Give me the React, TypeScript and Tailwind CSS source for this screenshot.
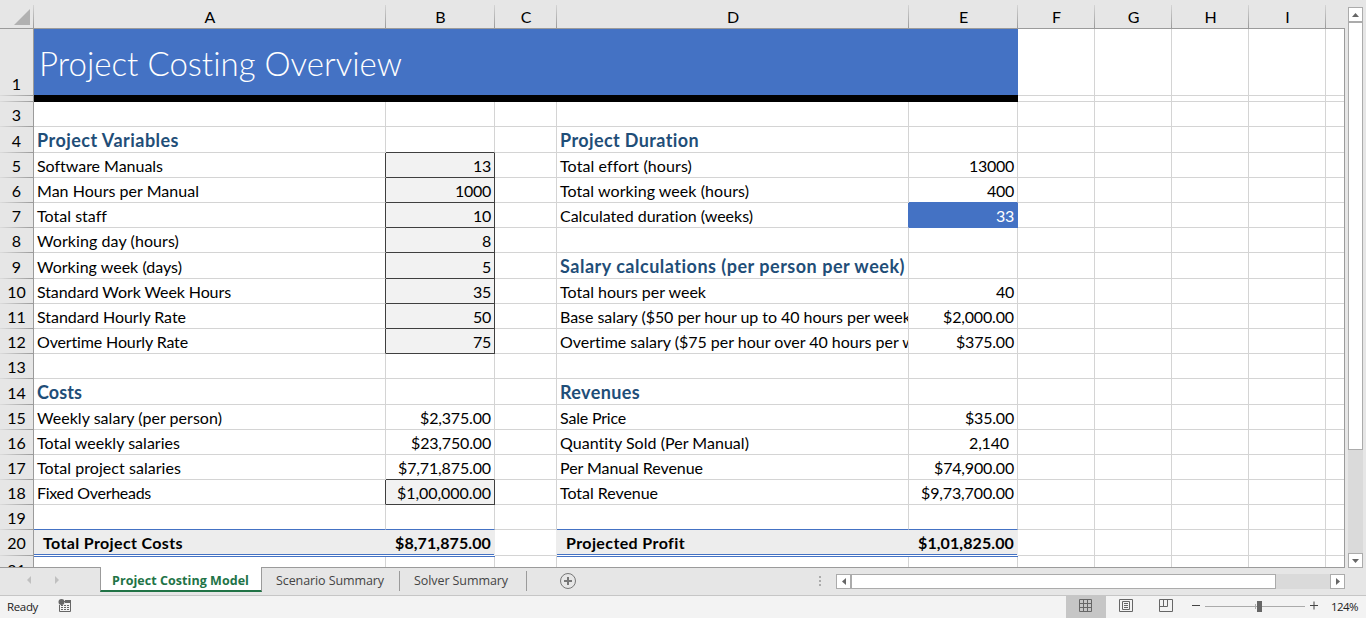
import { useLayoutEffect, useRef } from "react";

type FitProps = { text: string; w?: number; className?: string };

/* Text whose tracking is adjusted so that it takes a given width. */
function Fit({ text, w, className = "" }: FitProps) {
  const ref = useRef<HTMLSpanElement>(null);
  useLayoutEffect(() => {
    const el = ref.current;
    if (!el || !w) return;
    el.style.letterSpacing = "0.001px";
    const natural = el.getBoundingClientRect().width;
    el.style.letterSpacing = `${(w - natural) / text.length}px`;
  }, [text, w]);
  return (
    <span ref={ref} className={`inline-block whitespace-pre ${className}`}>
      {text}
    </span>
  );
}

type Row = { n: number; h: string; a?: [string, number]; b?: [string, number]; d?: [string, number]; e?: [string, number] };

const rows: Row[] = [
  { n: 3, h: "h-[25px]" },
  { n: 4, h: "h-[26px]", a: ["Project Variables", 142], d: ["Project Duration", 139] },
  { n: 5, h: "h-[25px]", a: ["Software Manuals", 126], b: ["13", 18], d: ["Total effort (hours)", 132], e: ["13000", 45] },
  { n: 6, h: "h-[25px]", a: ["Man Hours per Manual", 162], b: ["1000", 36], d: ["Total working week (hours)", 189], e: ["400", 27] },
  { n: 7, h: "h-[25px]", a: ["Total staff", 70], b: ["10", 18], d: ["Calculated duration (weeks)", 193], e: ["33", 18] },
  { n: 8, h: "h-[25px]", a: ["Working day (hours)", 142], b: ["8", 9] },
  { n: 9, h: "h-[26px]", a: ["Working week (days)", 145], b: ["5", 9], d: ["Salary calculations (per person per week)", 345] },
  { n: 10, h: "h-[25px]", a: ["Standard Work Week Hours", 194], b: ["35", 18], d: ["Total hours per week", 146], e: ["40", 18] },
  { n: 11, h: "h-[25px]", a: ["Standard Hourly Rate", 149], b: ["50", 18], d: ["Base salary ($50 per hour up to 40 hours per week)", 355], e: ["$2,000.00", 71] },
  { n: 12, h: "h-[25px]", a: ["Overtime Hourly Rate", 151], b: ["75", 18], d: ["Overtime salary ($75 per hour over 40 hours per week)", 384], e: ["$375.00", 58] },
  { n: 13, h: "h-[25px]" },
  { n: 14, h: "h-[26px]", a: ["Costs", 45], d: ["Revenues", 80] },
  { n: 15, h: "h-[25px]", a: ["Weekly salary (per person)", 185], b: ["$2,375.00", 71], d: ["Sale Price", 66], e: ["$35.00", 49] },
  { n: 16, h: "h-[25px]", a: ["Total weekly salaries", 143], b: ["$23,750.00", 80], d: ["Quantity Sold (Per Manual)", 189], e: ["2,140", 40] },
  { n: 17, h: "h-[25px]", a: ["Total project salaries", 144], b: ["$7,71,875.00", 93], d: ["Per Manual Revenue", 143], e: ["$74,900.00", 80] },
  { n: 18, h: "h-[25px]", a: ["Fixed Overheads", 114], b: ["$1,00,000.00", 94], d: ["Total Revenue", 98], e: ["$9,73,700.00", 93] },
  { n: 19, h: "h-[25px]" },
  { n: 20, h: "h-[26px]", a: ["Total Project Costs", 140], b: ["$8,71,875.00", 96], d: ["Projected Profit", 119], e: ["$1,01,825.00", 96] },
];

const isInput = (n: number) => (n >= 5 && n <= 12) || n === 18;
const isHeading = (col: string, n: number) => n === 4 || n === 14 || (col === "d" && n === 9);

function RowHead({ n, h }: { n: string; h: string }) {
  return (
    <div className={`flex w-[34px] shrink-0 flex-col border-r border-[#9b9b9b] bg-[#e6e6e6] ${h}`}>
      <div className={`flex min-h-0 flex-1 items-end justify-center overflow-hidden text-[16px] leading-[21px] ${n === "20" ? "pb-[2px]" : "pb-px"}`}>{n}</div>
      <div className="h-px shrink-0 bg-linear-to-r from-[#dcdcdc] to-[#9b9b9b]" />
    </div>
  );
}

function Cell({ col, row, w }: { col: "a" | "b" | "c" | "d" | "e"; row: Row; w: string }) {
  const n = row.n;
  const v = col === "c" ? undefined : row[col];
  const total = n === 20 && col !== "c";
  let right = "border-r border-r-[#d4d4d4]";
  let bottom = "border-b-[#d4d4d4]";
  let bg = "bg-white";
  if (isInput(n) && (col === "a" || col === "b")) right = "border-r border-r-[#3f3f3f]";
  if (col === "b" && (isInput(n) || n === 4 || n === 17)) bottom = "border-b-[#3f3f3f]";
  if (col === "b" && isInput(n)) bg = "bg-[#f2f2f2]";
  if (n === 7 && (col === "d" || col === "e")) right = "border-r border-r-[#4472c4]";
  if (col === "e" && (n === 6 || n === 7)) bottom = "border-b-[#4472c4]";
  if (col === "e" && n === 7) bg = "bg-[#4472c4]";
  if (n === 19 && col !== "c") bottom = "border-b-[#4472c4]";
  if (n === 20) right = col === "a" || col === "d" ? "" : "border-r border-r-[#ededed]";
  if (total) {
    bg = "bg-[#ededed]";
    bottom = "border-b-white";
  }
  const align = col === "b" || col === "e" ? "justify-end" : "justify-start";
  let pad = col === "b" || col === "e" ? "pr-[3px]" : "pl-[3px]";
  if (n === 16 && col === "e") pad = "pr-[8px]";
  if (total && (col === "a" || col === "d")) pad = "pl-[9px]";
  let text = "pb-px text-[16px] leading-[21px] text-black";
  if (isHeading(col, n)) text = "text-[18px] leading-[23px] font-bold text-[#1f4e78]";
  if (n === 20) text = "pb-px text-[16px] leading-[21px] font-bold text-black";
  if (col === "e" && n === 7) text = "pb-px text-[16px] leading-[21px] text-white";
  return (
    <div className={`flex shrink-0 flex-col border-b ${w} ${row.h} ${right} ${bottom} ${bg}`}>
      <div className={`flex min-h-0 flex-1 items-end overflow-hidden ${align} ${pad} ${text}`}>
        {v && <Fit text={v[0]} w={v[1]} />}
      </div>
      {total && <div className="h-px shrink-0 bg-[#4472c4]" />}
    </div>
  );
}

function Blank({ h }: { h: string }) {
  return (
    <>
      {[0, 1, 2, 3].map((i) => (
        <div key={i} className={`w-[77px] shrink-0 border-r border-b border-[#d4d4d4] bg-white ${h}`} />
      ))}
      <div className={`flex w-[19px] shrink-0 border-r border-[#9b9b9b] bg-white ${h}`}>
        <div className="flex-1 border-b border-[#d4d4d4]" />
      </div>
    </>
  );
}

const columns = [
  ["A", "w-[352px]"],
  ["B", "w-[109px]"],
  ["C", "w-[62px]"],
  ["D", "w-[352px]"],
  ["E", "w-[109px]"],
  ["F", "w-[77px]"],
  ["G", "w-[77px]"],
  ["H", "w-[77px]"],
  ["I", "w-[77px]"],
];

function Sheet() {
  return (
    <div className="h-[568px] w-[1345px] shrink-0 overflow-hidden">
      <div className="flex h-[29px] items-end border-b border-[#9b9b9b] bg-[#e6e6e6]">
        <div className="flex h-[23px] w-[34px] shrink-0 items-end justify-between pb-0">
          <svg className="mb-[3px] ml-[14px]" width="16" height="16" viewBox="0 0 16 16">
            <path d="M16 0V16H0Z" fill="#b1b1b1" />
          </svg>
          <div className="h-[23px] w-px bg-linear-to-b from-[#d4d4d4] to-[#9b9b9b]" />
        </div>
        {columns.map(([name, w]) => (
          <div key={name} className={`flex h-[28px] shrink-0 items-end ${w}`}>
            <div className="flex-1 pb-px pl-px text-center text-[16px] leading-[21px]">{name}</div>
            <div className="h-[23px] w-px bg-linear-to-b from-[#d4d4d4] to-[#9b9b9b]" />
          </div>
        ))}
      </div>
      <div className="flex">
        <div>
          <RowHead n="1" h="h-[67px]" />
          <RowHead n="" h="h-[6px]" />
        </div>
        <div className="flex h-[73px] w-[984px] shrink-0 items-start border-b-7 border-black bg-[#4472c4] pl-[5px] text-[33px] leading-[40px] font-light text-white">
          <Fit text="Project Costing Overview" w={363} className="mt-[14px]" />
        </div>
        <div>
          <div className="flex">
            <Blank h="h-[67px]" />
          </div>
          <div className="flex">
            <Blank h="h-[6px]" />
          </div>
        </div>
      </div>
      {rows.map((row) => (
        <div key={row.n} className="flex">
          <RowHead n={String(row.n)} h={row.h} />
          <Cell col="a" row={row} w="w-[352px]" />
          <Cell col="b" row={row} w="w-[109px]" />
          <Cell col="c" row={row} w="w-[62px]" />
          <Cell col="d" row={row} w="w-[352px]" />
          <Cell col="e" row={row} w="w-[109px]" />
          <Blank h={row.h} />
        </div>
      ))}
      <div className="flex h-[12px] overflow-hidden border-b border-[#9b9b9b]">
        <div className="h-[25px] w-[34px] shrink-0 border-r border-[#9b9b9b] bg-[#e6e6e6] pt-[3px] text-center text-[16px] leading-[21px]">21</div>
        {columns.map(([name, w]) => (
          <div key={name} className={`flex h-[11px] shrink-0 flex-col bg-white ${w}`}>
            {name !== "C" && name < "F" && <div className="h-px bg-[#4472c4]" />}
            <div className="flex-1 border-r border-[#d4d4d4]" />
          </div>
        ))}
        <div className="h-[11px] w-[19px] shrink-0 border-r border-[#9b9b9b] bg-white" />
      </div>
    </div>
  );
}

function VerticalScroll() {
  return (
    <div className="ml-[3px] flex w-[15px] flex-col pt-[7px]">
      <div className="flex h-[15px] items-center justify-center border border-[#ababab] bg-white">
        <svg width="7" height="4" viewBox="0 0 7 4"><path d="M3.5 0L7 4H0Z" fill="#666" /></svg>
      </div>
      <div className="h-[428px] border border-[#ababab] bg-white" />
      <div className="flex-1 bg-[#dadada]" />
      <div className="flex h-[15px] items-center justify-center border border-[#ababab] bg-white">
        <svg width="7" height="4" viewBox="0 0 7 4"><path d="M3.5 4L7 0H0Z" fill="#666" /></svg>
      </div>
    </div>
  );
}

function TabBar() {
  return (
    <div className="flex h-[28px] border-b border-[#c6c6c6] bg-[#e6e6e6] font-['Open_Sans','Noto_Sans',sans-serif] text-[12.5px] text-[#444]">
      <div className="flex w-[100px] items-start gap-[24px] pt-[8px] pl-[27px]">
        <svg width="4" height="8" viewBox="0 0 4 8"><path d="M4 0V8L0 4Z" fill="#c0c0c0" /></svg>
        <svg width="4" height="8" viewBox="0 0 4 8"><path d="M0 0V8L4 4Z" fill="#c0c0c0" /></svg>
      </div>
      <div className="-mt-px flex h-[25px] w-[162px] justify-start border-x border-b-2 border-x-[#9b9b9b] border-b-[#217346] bg-white pl-[11px] font-bold text-[#217346]">
        <Fit text="Project Costing Model" w={137} className="mt-[4px] leading-[20px]" />
      </div>
      <div className="mt-[3px] flex h-[20px] w-[138px] border-r border-[#9b9b9b] pl-[14px]">
        <Fit text="Scenario Summary" w={108} className="leading-[20px]" />
      </div>
      <div className="mt-[3px] flex h-[20px] w-[127px] border-r border-[#9b9b9b] pl-[14px]">
        <Fit text="Solver Summary" w={94} className="leading-[20px]" />
      </div>
      <svg className="mt-[4px] ml-[32px]" width="18" height="18" viewBox="0 0 18 18" fill="none">
        <circle cx="9" cy="9" r="7.5" stroke="#777" />
        <path d="M9 5v8M5 9h8" stroke="#777" strokeWidth="2" />
      </svg>
      <div className="mt-[8px] ml-[242px] flex h-[10px] w-[2px] flex-col justify-between">
        <i className="size-[2px] bg-[#ababab]" />
        <i className="size-[2px] bg-[#ababab]" />
        <i className="size-[2px] bg-[#ababab]" />
      </div>
      <div className="mt-[6px] ml-[15px] flex h-[15px] w-[509px]">
        <div className="flex w-[15px] items-center justify-center border border-[#ababab] bg-white">
          <svg width="4" height="7" viewBox="0 0 4 7"><path d="M4 0V7L0 3.5Z" fill="#666" /></svg>
        </div>
        <div className="w-[425px] border border-[#ababab] bg-white" />
        <div className="flex-1 bg-[#dadada]" />
        <div className="flex w-[15px] items-center justify-center border border-[#ababab] bg-white">
          <svg width="4" height="7" viewBox="0 0 4 7"><path d="M0 0V7L4 3.5Z" fill="#666" /></svg>
        </div>
      </div>
    </div>
  );
}

function StatusBar() {
  return (
    <div className="flex h-[22px] bg-[#f3f3f3] font-['Open_Sans','Noto_Sans',sans-serif] text-[11.5px] leading-[22px] text-[#222]">
      <Fit text="Ready" w={31} className="ml-[7px]" />
      <svg className="mt-[2px] ml-[20px]" width="14" height="15" viewBox="0 0 14 15">
        <path d="M5.500 3.500H12.500V13.500H1.500V7" fill="none" stroke="#666" />
        <path d="M7 2h6v3H7z" fill="#666" />
        <path d="M3 7.500h9M3 9.500h9M3 11.500h9" stroke="#666" strokeDasharray="2 1" />
        <circle cx="3.500" cy="4" r="3" fill="#666" />
      </svg>
      <div className="ml-[994px] flex w-[40px] justify-center bg-[#c6c6c6]">
        <svg className="mt-[3px] -ml-px" width="13" height="13" viewBox="0 0 13 13" fill="none" stroke="#666">
          <path d="M.5 .5h12v12H.5zM4.500 0v13M8.500 0v13M0 4.500h13M0 8.500h13" />
        </svg>
      </div>
      <svg className="mt-[3px] ml-[13px]" width="14" height="13" viewBox="0 0 14 13" fill="none" stroke="#666">
        <path d="M.5 .5h13v12H.5zM3.500 2.500h7v8h-7zM5 4.500h4M5 6.500h4M5 8.500h4" />
      </svg>
      <svg className="mt-[3px] ml-[26px]" width="14" height="13" viewBox="0 0 14 13" fill="none" stroke="#666">
        <path d="M.5 .5h13v12H.5zM4.500 0v7M8.500 0v7.500H0" />
      </svg>
      <svg className="mt-[3px] ml-[19px]" width="127" height="16" viewBox="0 0 127 16" fill="none">
        <path d="M0 6.500h8M118 6.500h8M122 2.500v8" stroke="#444" />
        <path d="M13 7.500h100M63.500 5v5" stroke="#ababab" />
        <path d="M65 2h5v11h-5z" fill="#666" />
      </svg>
      <Fit text="124%" w={27} className="ml-[12px]" />
    </div>
  );
}

export default function App() {
  return (
    <div className="flex h-[618px] w-[1366px] flex-col overflow-hidden bg-[#e6e6e6] font-['Lato','Open_Sans',sans-serif] text-black">
      <div className="flex h-[568px] shrink-0">
        <Sheet />
        <VerticalScroll />
      </div>
      <TabBar />
      <StatusBar />
    </div>
  );
}
